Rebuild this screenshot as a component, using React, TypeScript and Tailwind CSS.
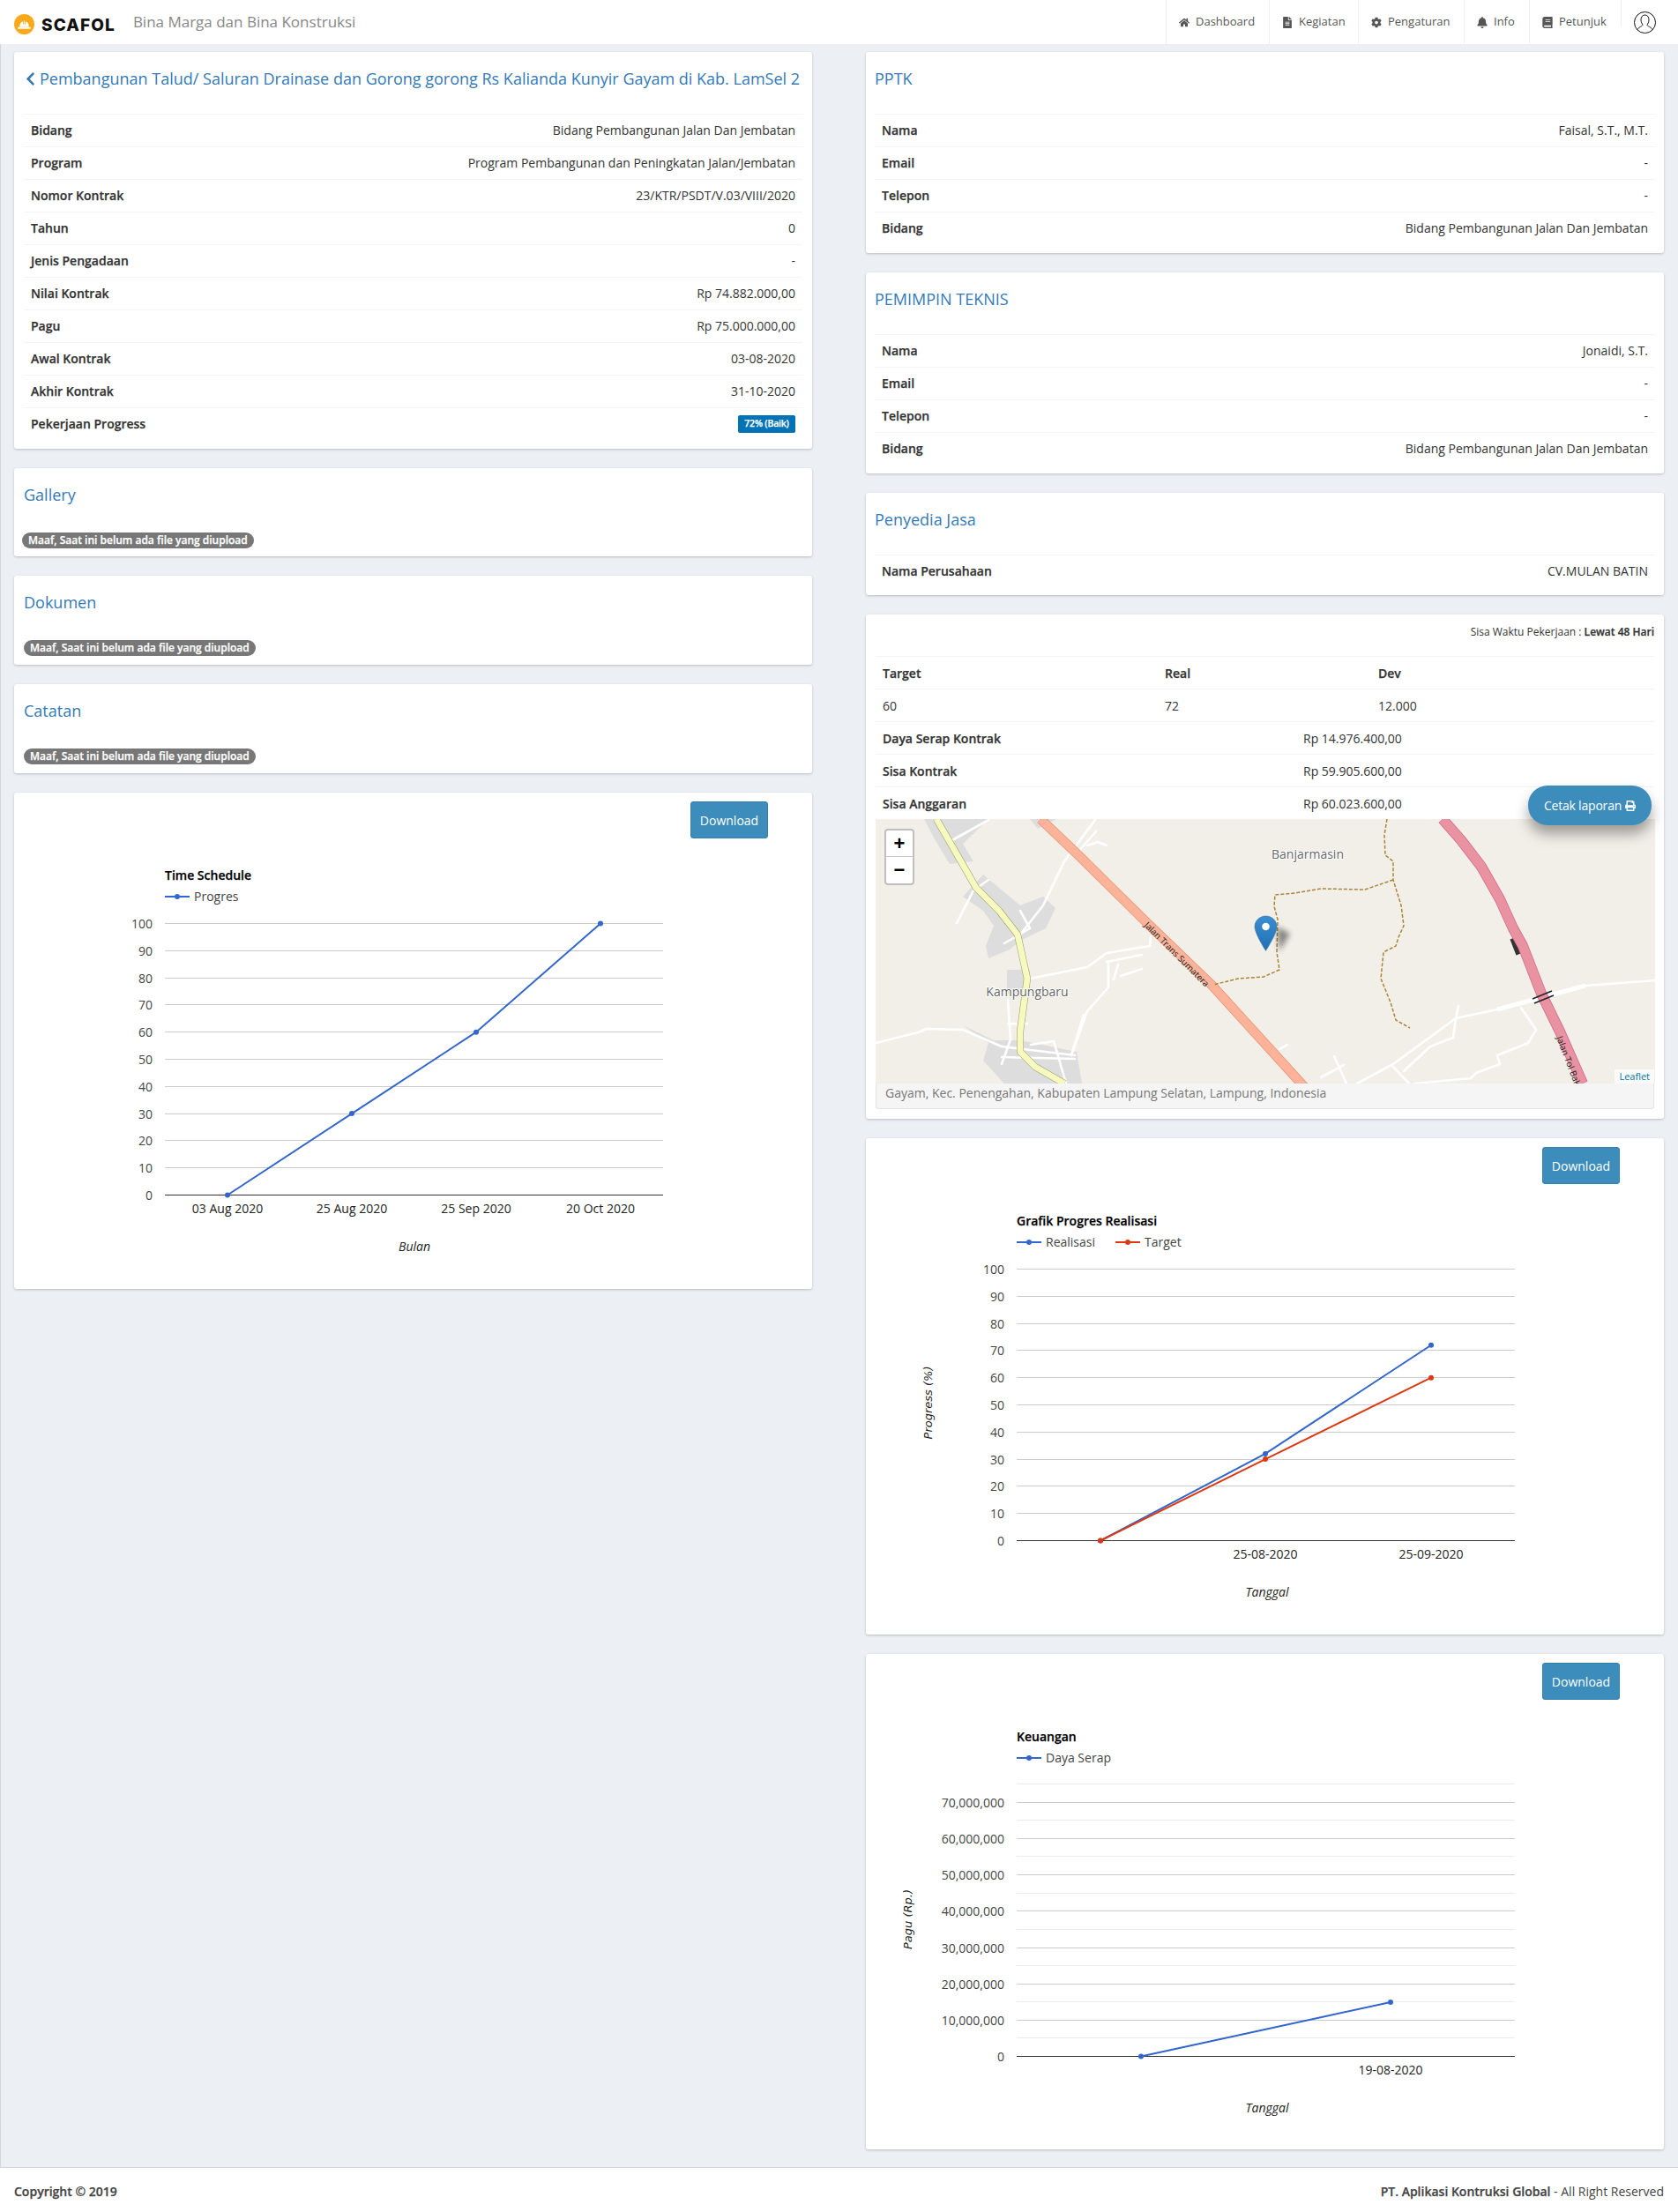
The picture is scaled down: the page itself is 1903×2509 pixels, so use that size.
import { FaBell, FaBook, FaChevronLeft, FaCog, FaFileAlt, FaHome, FaPrint } from "react-icons/fa";

const navItems = [
  { icon: FaHome, label: "Dashboard", w: "w-[117px]" },
  { icon: FaFileAlt, label: "Kegiatan", w: "w-[101px]" },
  { icon: FaCog, label: "Pengaturan", w: "w-[120px]" },
  { icon: FaBell, label: "Info", w: "w-[74px]" },
  { icon: FaBook, label: "Petunjuk", w: "w-[104px]" },
];

const infoRows = [
  ["Bidang", "Bidang Pembangunan Jalan Dan Jembatan"],
  ["Program", "Program Pembangunan dan Peningkatan Jalan/Jembatan"],
  ["Nomor Kontrak", "23/KTR/PSDT/V.03/VIII/2020"],
  ["Tahun", "0"],
  ["Jenis Pengadaan", "-"],
  ["Nilai Kontrak", "Rp 74.882.000,00"],
  ["Pagu", "Rp 75.000.000,00"],
  ["Awal Kontrak", "03-08-2020"],
  ["Akhir Kontrak", "31-10-2020"],
];

// labels in the picture are a thick semibold, heavier than 600 but not as wide as 700
const heavy = "font-semibold [-webkit-text-stroke:0.25px_currentColor]";

function Card({ className = "", children }: { className?: string; children: React.ReactNode }) {
  return (
    <div className={`relative bg-white rounded-[3px] shadow-[0_1px_3px_rgba(0,0,0,0.22)] ${className}`}>{children}</div>
  );
}

function Row({ label, value }: { label: string; value: React.ReactNode }) {
  return (
    <div className="flex h-[37px] items-center justify-between border-t border-[#f4f4f4] px-2 pb-[2px]">
      <span className={heavy}>{label}</span>
      <span>{value}</span>
    </div>
  );
}

function Title({ children }: { children: React.ReactNode }) {
  return <div className="h-[70px] pt-5 text-[18px] leading-5 text-[#337ab7]">{children}</div>;
}

function People({ title, name }: { title: string; name: string }) {
  return (
    <Card className="h-[228px] px-[10px]">
      <Title>{title}</Title>
      <Row label="Nama" value={name} />
      <Row label="Email" value="-" />
      <Row label="Telepon" value="-" />
      <Row label="Bidang" value="Bidang Pembangunan Jalan Dan Jembatan" />
    </Card>
  );
}

function EmptyFiles({ title, top, left, h }: { title: string; top: string; left: string; h: string }) {
  return (
    <Card className={`${h} px-[11px]`}>
      <div className="h-[70px] pt-5 text-[18px] leading-5 text-[#337ab7]">{title}</div>
      <span className={`inline-block rounded-[10px] bg-[#777] px-[7px] py-[3px] text-[12px] leading-3 ${heavy} text-white ${top} ${left}`}>
        Maaf, Saat ini belum ada file yang diupload
      </span>
    </Card>
  );
}

function Download() {
  return (
    <div className="flex justify-end pt-[10px] pr-[50px]">
      <div className="flex h-[42px] w-[88px] items-center justify-center rounded-[3px] border border-[#367fa9] bg-[#3c8dbc] text-[14px] text-white">
        Download
      </div>
    </div>
  );
}

type ChartProps = {
  title: string;
  legends: { label: string; color: string; x: number }[];
  ticks: { label: string; y: number }[];
  minor?: number[];
  xLabels: { label: string; x: number }[];
  series: { color: string; pts: number[][] }[];
  yTitle?: { label: string; x: number; y: number };
  xTitle: { label: string; x: number };
};

function Chart({ title, legends, ticks, minor = [], xLabels, series, yTitle, xTitle }: ChartProps) {
  return (
    <svg className="block w-full" height={511} viewBox="0 0 905 511" fontFamily="'Open Sans', sans-serif" fontSize="14">
      <text x="171" y="47" fontWeight="600" stroke="#000" strokeWidth="0.25" fill="#000">{title}</text>
      {legends.map((l) => (
        <g key={l.label}>
          <line x1={l.x} x2={l.x + 28} y1="66" y2="66" stroke={l.color} strokeWidth="2" />
          <circle cx={l.x + 14} cy="66" r="3" fill={l.color} />
          <text x={l.x + 33} y="71" fill="#444">{l.label}</text>
        </g>
      ))}
      {minor.map((y) => (
        <line key={y} x1="171" x2="736" y1={y} y2={y} stroke="#ebebeb" />
      ))}
      {ticks.map((t, i) => (
        <g key={t.label}>
          <line x1="171" x2="736" y1={t.y} y2={t.y} stroke={i === ticks.length - 1 ? "#333" : "#ccc"} />
          <text x="157" y={t.y + 5} textAnchor="end" fill="#444">{t.label}</text>
        </g>
      ))}
      {xLabels.map((l) => (
        <text key={l.label} x={l.x} y="425" textAnchor="middle" fill="#222">{l.label}</text>
      ))}
      {series.map((s) => (
        <g key={s.color}>
          <polyline points={s.pts.map((p) => p.join(",")).join(" ")} fill="none" stroke={s.color} strokeWidth="2" />
          {s.pts.map((p) => (
            <circle key={p.join()} cx={p[0]} cy={p[1]} r="3" fill={s.color} />
          ))}
        </g>
      ))}
      <text x={xTitle.x} y="468" textAnchor="middle" fontStyle="italic" fill="#222">{xTitle.label}</text>
      {yTitle && (
        <text
          transform={`translate(${yTitle.x} ${yTitle.y}) rotate(-90)`}
          textAnchor="middle"
          fontFamily="'DejaVu Sans', sans-serif"
          fontStyle="italic"
          fontSize="13"
          fill="#222"
        >
          {yTitle.label}
        </text>
      )}
    </svg>
  );
}

const pctTicks = [100, 90, 80, 70, 60, 50, 40, 30, 20, 10, 0];
const tickY = (i: number) => Math.round(96 + i * 30.8) + 0.5;
const pctY = (v: number) => 404.5 - v * 3.08;
const moneyTicks = ["70,000,000", "60,000,000", "50,000,000", "40,000,000", "30,000,000", "20,000,000", "10,000,000", "0"];

const whiteRoads = [
  "128,1 87,24",
  "128,69 111,81 92,118",
  "164,104 175,124 146,141",
  "164,131 190,98 214,48 249,1",
  "240,30 252,26 262,30",
  "228,39 250,14",
  "175,181 240,168 262,152 311,144 312,133",
  "264,163 264,191 240,218 222,268",
  "275,165 270,182",
  "278,178 302,170",
  "262,162 302,154",
  "0,254 48,242 58,238 99,239 143,258",
  "150,205 153,250 143,278",
  "150,232 172,232",
  "143,258 226,268",
  "143,270 226,272",
  "176,256 202,252 216,300",
  "884,183 805,189 705,216 658,226 587,278 546,300",
  "658,226 655,248 629,258 599,286",
  "658,226 661,212",
  "732,214 749,239 740,254 705,268 708,278 681,288 675,294 611,300",
  "587,281 605,300",
  "520,269 534,300",
  "505,293 531,279",
  "458,261 467,256",
  "222,268 236,222",
];

const greyAreas = [
  "55,0 66,21 84,51 111,48 99,28 128,0",
  "99,88 122,63 164,98 190,88 204,101 193,124 164,138 152,148 128,158 125,144 134,121 122,104",
  "149,171 175,171 175,198 149,198",
  "99,234 134,251 164,251 228,264 234,300 146,300 122,274 128,254",
  "175,0 184,11 205,0",
];

const tollRoad = "643,0 664,24 687,54 708,91 723,124 734,144 755,198 776,241 802,300";
const transRoad = "187,0 228,39 308,118 381,188 510,330";
const yellowRoad = "69,0 87,31 114,78 140,104 161,131 172,181 164,241 164,264 181,281 214,300";

function MapView() {
  return (
    <svg className="block" width="884" height="300" viewBox="0 0 884 300" fontFamily="'Open Sans', sans-serif">
      <defs>
        <linearGradient id="pin" x1="0" y1="0" x2="0" y2="1">
          <stop offset="0" stopColor="#3b8ed0" />
          <stop offset="1" stopColor="#1f6fb5" />
        </linearGradient>
        <filter id="blur" x="-50%" y="-50%" width="200%" height="200%">
          <feGaussianBlur stdDeviation="3" />
        </filter>
      </defs>
      <rect width="884" height="300" fill="#f2efe9" />
      {greyAreas.map((p) => (
        <polygon key={p} points={p} fill="#dddddd" />
      ))}
      {whiteRoads.map((p) => (
        <polyline key={p} points={p} fill="none" stroke="#fff" strokeWidth="2.6" strokeLinejoin="round" strokeLinecap="round" />
      ))}
      <polyline points="705,216 805,189" fill="none" stroke="#fff" strokeWidth="5" />
      <polyline points={transRoad} fill="none" stroke="#e8926f" strokeWidth="11" />
      <polyline points={transRoad} fill="none" stroke="#fcb399" strokeWidth="9.500" />
      <polyline points={yellowRoad} fill="none" stroke="#a0a070" strokeWidth="8" strokeLinejoin="round" />
      <polyline points={yellowRoad} fill="none" stroke="#f7fabf" strokeWidth="6.800" strokeLinejoin="round" />
      <line x1="726" y1="134" x2="733" y2="152" stroke="#333" strokeWidth="14" />
      <polyline points={tollRoad} fill="none" stroke="#d5688a" strokeWidth="12" strokeLinejoin="round" />
      <polyline points={tollRoad} fill="none" stroke="#e892a2" strokeWidth="10.500" strokeLinejoin="round" />
      <line x1="745" y1="204" x2="767" y2="195" stroke="#222" strokeWidth="1.5" />
      <line x1="747" y1="209" x2="769" y2="200" stroke="#222" strokeWidth="1.5" />
      <polyline
        points="580,0 577,18 578,41 587,48 587,69 596,98 599,121 593,134 590,144 576,151 573,181 584,208 590,228 606,237"
        fill="none"
        stroke="#ac8437"
        strokeWidth="1.5"
        strokeDasharray="4 2"
      />
      <polyline
        points="587,69 555,80 505,79 476,84 453,86 452,99 456,114 455,151 458,171 440,179 411,181 383,188"
        fill="none"
        stroke="#ac8437"
        strokeWidth="1.5"
        strokeDasharray="4 2"
      />
      <text x="490" y="45" textAnchor="middle" fontSize="14" fill="#666" stroke="#fff" strokeWidth="2" paintOrder="stroke">
        Banjarmasin
      </text>
      <text x="172" y="201" textAnchor="middle" fontSize="14" fill="#666" stroke="#fff" strokeWidth="2" paintOrder="stroke">
        Kampungbaru
      </text>
      <text transform="translate(304 121) rotate(45)" fontSize="10" fill="#222">Jalan Trans Sumatera</text>
      <text transform="translate(772 248) rotate(69)" fontSize="10" fill="#222">Jalan Tol Bak</text>
      <path d="M455 122 L470 130 L458 150 Z" fill="#000" opacity="0.45" filter="url(#blur)" />
      <g transform="translate(430 110) scale(1 0.96)">
        <path d="M12.500 0C5.600 0 0 5.600 0 12.500 0 21 12.500 41 12.500 41S25 21 25 12.500C25 5.600 19.400 0 12.500 0Z" fill="url(#pin)" stroke="#2a6fa8" strokeWidth="0.6" />
        <circle cx="12.500" cy="12.500" r="4.300" fill="#fff" />
      </g>
    </svg>
  );
}

export default function App() {
  return (
    <div className="min-h-[2509px] bg-[#ecf0f5] font-['Open_Sans',sans-serif] text-[14px] text-[#333]">
      {/* header */}
      <header className="flex h-[50px] items-center bg-white pl-4">
        <svg width="23" height="23" viewBox="0 0 24 24" className="mt-[5px] shrink-0">
          <circle cx="12" cy="12" r="12" fill="#fba919" />
          <path d="M4.500 15.500h15v2h-15zM6.500 15c0-3.400 1.600-5.600 4-6.300V12h1V7.500h1V12h1V8.700c2.400.7 4 2.900 4 6.300z" fill="#fff" />
        </svg>
        <span className="mt-[6px] ml-2 font-['Inter',sans-serif] text-[19px] leading-none font-extrabold tracking-[1.1px] text-[#111]">
          SCAFOL
        </span>
        <span className="ml-[20px] text-[17px] text-[#888]">Bina Marga dan Bina Konstruksi</span>
        <nav className="ml-auto flex h-full items-start">
          {navItems.map((item) => (
            <div key={item.label} className={`flex h-[50px] items-center gap-[7px] border-l border-[#eee] pl-[14px] text-[13px] text-[#555] ${item.w}`}>
              <item.icon className="h-[13px] w-[12px] shrink-0" />
              <span>{item.label}</span>
            </div>
          ))}
          <div className="h-[30px] w-px bg-[#eee]" />
          <div className="flex h-[50px] w-[64px] items-center pl-[14px]">
            <svg width="25" height="25" viewBox="0 0 25 25" fill="none" stroke="#111" strokeWidth="1">
              <circle cx="12.500" cy="12.500" r="12" />
              <path d="M12.500 4C9.500 4 8 6.500 8 9.500c0 2.500 1.200 4.500 2 5.500 0 1.800-4.500 2.500-6 5.500M12.500 4c3 0 4.500 2.500 4.500 5.500 0 2.500-1.200 4.500-2 5.500 0 1.800 4.500 2.500 6 5.500" />
            </svg>
          </div>
        </nav>
      </header>

      <main className="grid grid-cols-2 items-start gap-x-[61px] border-l border-[#d2d6de] pt-[9px] pr-4 pb-5 pl-[15px]">
        {/* left column */}
        <div className="flex flex-col gap-[22px]">
          <Card className="h-[450px] px-[11px]">
            <div className="flex h-[70px] items-start gap-[5px] pt-5 pl-[2px] text-[18px] leading-5 text-[#337ab7]">
              <FaChevronLeft className="mt-[2px] h-[17px] w-[11px] shrink-0" />
              <span className="whitespace-nowrap">Pembangunan Talud/ Saluran Drainase dan Gorong gorong Rs Kalianda Kunyir Gayam di Kab. LamSel 2</span>
            </div>
            {infoRows.map(([l, v]) => (
              <Row key={l} label={l} value={v} />
            ))}
            <Row
              label="Pekerjaan Progress"
              value={
                <span className="mt-[2px] flex h-5 w-[65px] items-center justify-center rounded-[2px] bg-[#0073b7] text-[10.5px] font-semibold tracking-[-0.2px] text-white [-webkit-text-stroke:0.25px_currentColor]">
                  72% (Baik)
                </span>
              }
            />
          </Card>
          <EmptyFiles title="Gallery" h="h-[100px]" top="mt-[2px]" left="-ml-[2px]" />
          <EmptyFiles title="Dokumen" h="h-[101px]" top="mt-[3px]" left="ml-0" />
          <EmptyFiles title="Catatan" h="h-[101px]" top="mt-[3px]" left="ml-0" />
          <Card className="h-[563px]">
            <Download />
            <Chart
              title="Time Schedule"
              legends={[{ label: "Progres", color: "#3366cc", x: 171 }]}
              ticks={pctTicks.map((v, i) => ({ label: String(v), y: tickY(i) }))}
              xLabels={[
                { label: "03 Aug 2020", x: 242 },
                { label: "25 Aug 2020", x: 383 },
                { label: "25 Sep 2020", x: 524 },
                { label: "20 Oct 2020", x: 665 },
              ]}
              series={[{ color: "#3366cc", pts: [[242, pctY(0)], [383, pctY(30)], [524, pctY(60)], [665, pctY(100)]] }]}
              xTitle={{ label: "Bulan", x: 454 }}
            />
          </Card>
        </div>

        {/* right column */}
        <div className="flex flex-col gap-[22px]">
          <People title="PPTK" name="Faisal, S.T., M.T." />
          <People title="PEMIMPIN TEKNIS" name="Jonaidi, S.T." />
          <Card className="h-[116px] px-[10px]">
            <Title>Penyedia Jasa</Title>
            <Row label="Nama Perusahaan" value="CV.MULAN BATIN" />
          </Card>

          <Card className="h-[572px] px-[11px]">
            <div className="h-[47px] pt-[11px] text-right text-[12px] leading-[18px]">
              Sisa Waktu Pekerjaan : <span className={heavy}>Lewat 48 Hari</span>
            </div>
            <div className={`grid h-[37px] grid-cols-[320px_242px_1fr] items-center border-t border-[#f4f4f4] px-2 ${heavy}`}>
              <span>Target</span>
              <span>Real</span>
              <span>Dev</span>
            </div>
            <div className="grid h-[37px] grid-cols-[320px_242px_1fr] items-center border-t border-[#f4f4f4] px-2">
              <span>60</span>
              <span>72</span>
              <span>12.000</span>
            </div>
            {[
              ["Daya Serap Kontrak", "Rp 14.976.400,00"],
              ["Sisa Kontrak", "Rp 59.905.600,00"],
              ["Sisa Anggaran", "Rp 60.023.600,00"],
            ].map(([l, v]) => (
              <div key={l} className="grid h-[37px] grid-cols-[477px_1fr] items-center border-t border-[#f4f4f4] px-2">
                <span className={heavy}>{l}</span>
                <span>{v}</span>
              </div>
            ))}
            <div className="relative">
              <MapView />
              <div className="absolute top-[11px] left-[10px] flex w-[34px] flex-col overflow-hidden rounded-[4px] border-2 border-[#bfbfbf] bg-white font-['Liberation_Sans',sans-serif] text-[22px] leading-[30px] font-bold text-black">
                <span className="h-[30px] border-b border-[#ccc] text-center">+</span>
                <span className="h-[30px] text-center">−</span>
              </div>
              <div className="absolute right-0 bottom-0 bg-white/70 px-[5px] text-[11px] leading-4 text-[#0078a8]">Leaflet</div>
            </div>
            <div className="h-[29px] rounded-b-[3px] border border-t-0 border-[#e3e3e3] bg-[#f5f5f5] pl-[10px] text-[14px] leading-[22px] text-[#777]">
              Gayam, Kec. Penengahan, Kabupaten Lampung Selatan, Lampung, Indonesia
            </div>
            <div className="absolute top-[194px] right-[14px] flex h-[45px] w-[140px] items-center justify-center gap-1 rounded-[22px] bg-[#3c8dbc] text-[14px] tracking-[-0.2px] text-white shadow-[0_10px_15px_rgba(0,0,0,0.35)]">
              Cetak laporan <FaPrint className="h-3 w-3" />
            </div>
          </Card>

          <Card className="h-[563px]">
            <Download />
            <Chart
              title="Grafik Progres Realisasi"
              legends={[
                { label: "Realisasi", color: "#3366cc", x: 171 },
                { label: "Target", color: "#dc3912", x: 283 },
              ]}
              ticks={pctTicks.map((v, i) => ({ label: String(v), y: tickY(i) }))}
              xLabels={[
                { label: "25-08-2020", x: 453 },
                { label: "25-09-2020", x: 641 },
              ]}
              series={[
                { color: "#3366cc", pts: [[266, pctY(0)], [453, pctY(32)], [641, pctY(72)]] },
                { color: "#dc3912", pts: [[266, pctY(0)], [453, pctY(30)], [641, pctY(60)]] },
              ]}
              yTitle={{ label: "Progress (%)", x: 75, y: 248 }}
              xTitle={{ label: "Tanggal", x: 455 }}
            />
          </Card>

          <Card className="h-[562px]">
            <Download />
            <Chart
              title="Keuangan"
              legends={[{ label: "Daya Serap", color: "#3366cc", x: 171 }]}
              ticks={moneyTicks.map((label, i) => ({ label, y: Math.round(116 + i * 41.14) + 0.5 }))}
              minor={[95.5, 136.5, 177.5, 219.5, 260.5, 301.5, 342.5, 383.5]}
              xLabels={[{ label: "19-08-2020", x: 595 }]}
              series={[{ color: "#3366cc", pts: [[312, 404.5], [595, 343]] }]}
              yTitle={{ label: "Pagu (Rp.)", x: 52, y: 249 }}
              xTitle={{ label: "Tanggal", x: 455 }}
            />
          </Card>
        </div>
      </main>

      <footer className="flex h-[51px] items-center justify-between border-t border-[#d2d6de] bg-white px-4 pt-[3px] text-[#444]">
        <span className={heavy}>Copyright © 2019</span>
        <span>
          <span className={heavy}>PT. Aplikasi Kontruksi Global</span> - All Right Reserved
        </span>
      </footer>
    </div>
  );
}
